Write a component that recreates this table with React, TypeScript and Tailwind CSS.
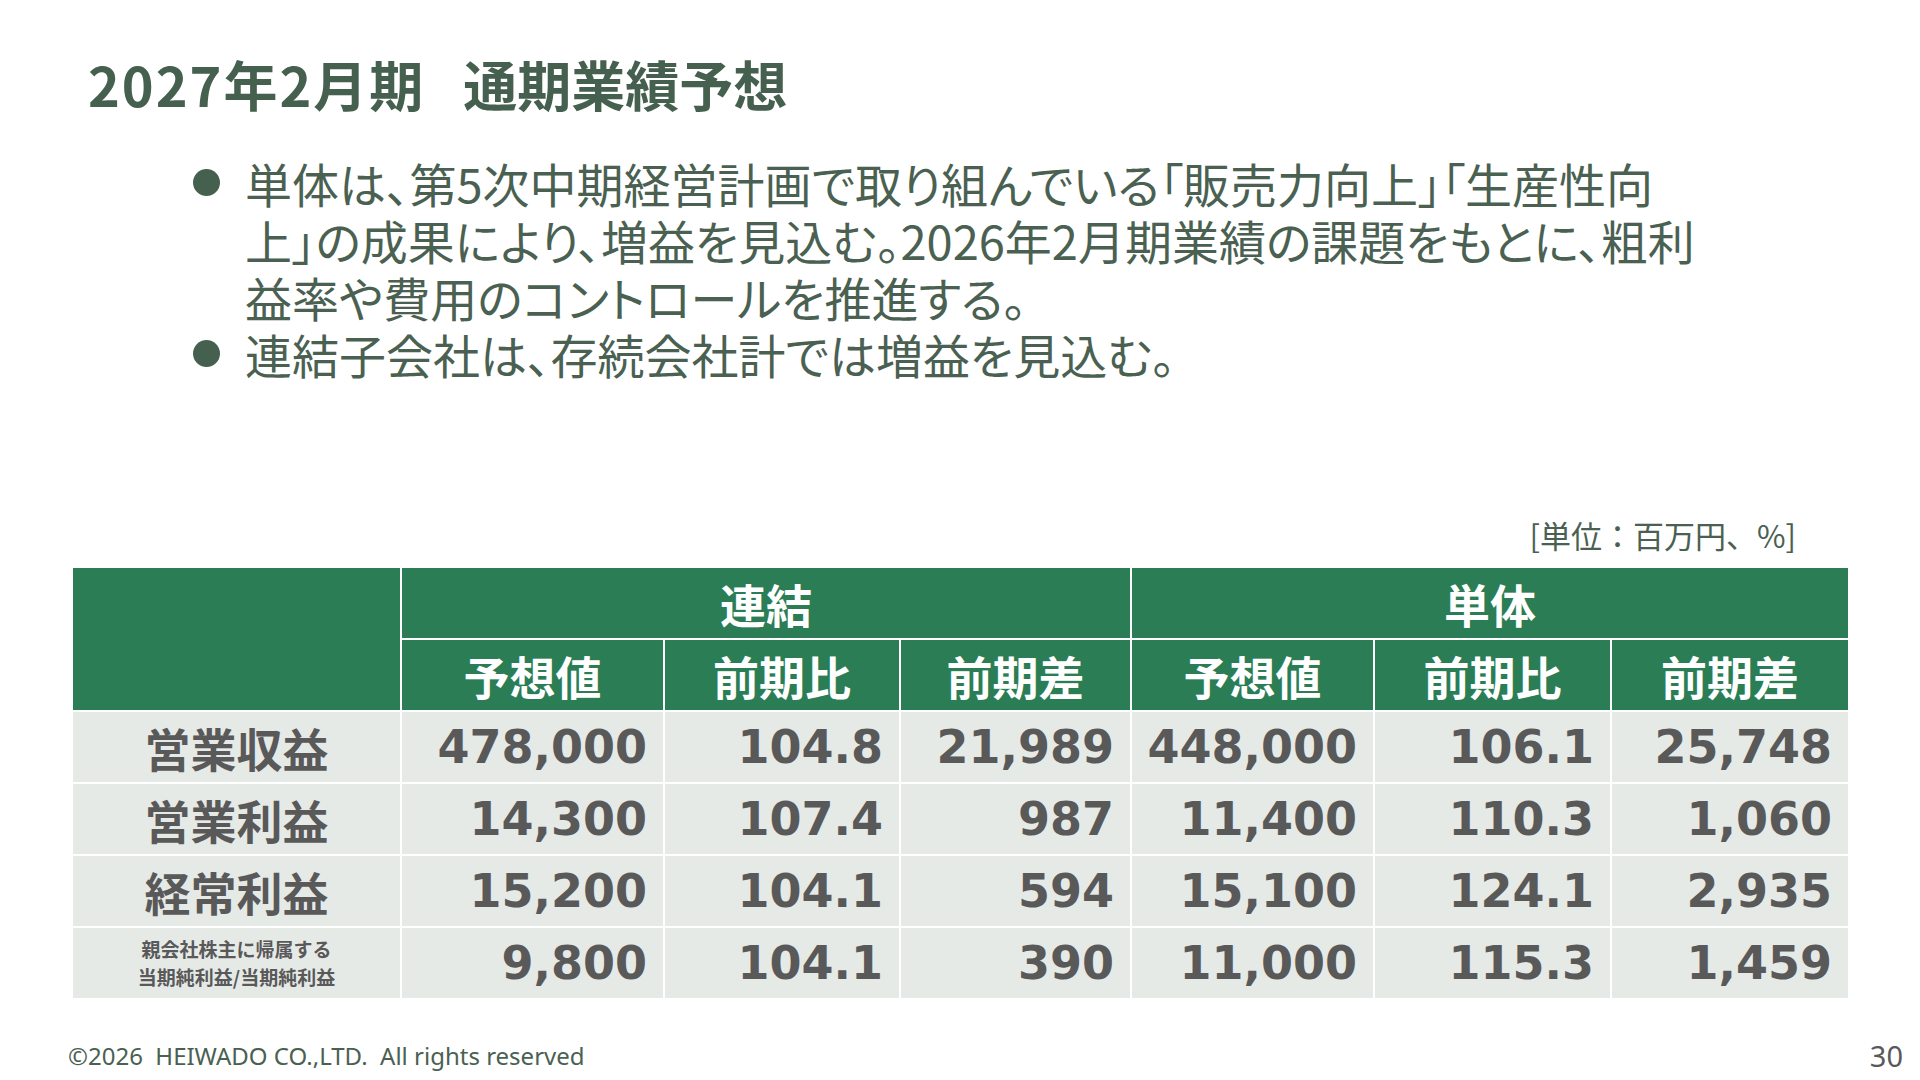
import React from 'react';

const jp = '"Noto Sans CJK JP", "Noto Sans", sans-serif';
const num = '"DejaVu Sans", "Liberation Sans", sans-serif';

const rows = [
    { label: '営業収益', values: ['478,000', '104.8', '21,989', '448,000', '106.1', '25,748'] },
    { label: '営業利益', values: ['14,300', '107.4', '987', '11,400', '110.3', '1,060'] },
    { label: '経常利益', values: ['15,200', '104.1', '594', '15,100', '124.1', '2,935'] },
    { label: null, values: ['9,800', '104.1', '390', '11,000', '115.3', '1,459'] },
];

const subHeads = ['予想値', '前期比', '前期差', '予想値', '前期比', '前期差'];

function Bullet({ children }: { children: React.ReactNode }) {
    return (
        <div className="flex">
            <div className="w-[245px] flex justify-end pr-[25px] pt-[15px] shrink-0">
                <div className="w-[27px] h-[27px] rounded-full bg-[#46604f]" />
            </div>
            <div className="whitespace-nowrap">{children}</div>
        </div>
    );
}

export default function App() {
    return (
        <div
            className="w-[1920px] h-[1080px] bg-white flex flex-col overflow-hidden"
            style={{ fontFamily: jp }}
        >
            {/* title */}
            <div className="mt-[57px] pl-[88px] h-[54px] flex gap-[38px] text-[54px] leading-[54px] font-bold text-[#46604f]">
                <span className="tracking-[2px]">2027年2月期</span>
                <span>通期業績予想</span>
            </div>

            {/* bullets */}
            <div className="mt-[43px] text-[47px] leading-[57px] text-[#4a6152]" style={{ fontFeatureSettings: '"palt"' }}>
                <Bullet>
                    単体は、第5次中期経営計画で取り組んでいる「販売力向上」「生産性向
                    <br />
                    上」の成果により、増益を見込む。2026年2月期業績の課題をもとに、粗利
                    <br />
                    益率や費用のコントロールを推進する。
                </Bullet>
                <Bullet>連結子会社は、存続会社計では増益を見込む。</Bullet>
            </div>

            {/* unit */}
            <div className="mt-[135px] pr-[124px] text-right text-[31px] leading-[36px] text-[#4a6152]">
                [単位：百万円、%]
            </div>

            {/* table */}
            <div className="mt-[15px] ml-[73px] grid grid-cols-[327px_261px_234px_229px_241px_235px_236px] grid-rows-[70px_70px_70px_70px_70px_70px] gap-[2px] w-[1775px]">
                <div className="row-span-2 bg-[#2a7d55]" />
                <div className="col-span-3 bg-[#2a7d55] flex items-center justify-center text-white font-bold text-[46px]">
                    連結
                </div>
                <div className="col-span-3 bg-[#2a7d55] flex items-center justify-center text-white font-bold text-[46px]">
                    単体
                </div>
                {subHeads.map((h, i) => (
                    <div key={i} className="bg-[#2a7d55] flex items-center justify-center text-white font-bold text-[46px]">
                        {h}
                    </div>
                ))}
                {rows.map((r, ri) => (
                    <React.Fragment key={ri}>
                        <div className="bg-[#e6eae7] flex flex-col items-center justify-center text-[#595959] font-bold">
                            {r.label ? (
                                <span className="text-[46px] leading-none">{r.label}</span>
                            ) : (
                                <>
                                    <span className="text-[19px] leading-[28px]">親会社株主に帰属する</span>
                                    <span className="text-[19px] leading-[28px]">当期純利益/当期純利益</span>
                                </>
                            )}
                        </div>
                        {r.values.map((v, vi) => (
                            <div
                                key={vi}
                                className="bg-[#e6eae7] flex items-center justify-end pr-[16px] text-[#595959] font-bold text-[46px]"
                                style={{ fontFamily: num }}
                            >
                                {v}
                            </div>
                        ))}
                    </React.Fragment>
                ))}
            </div>

            {/* footer */}
            <div className="mt-auto mb-[9px] flex items-center justify-between pl-[68px] pr-[17px] h-[30px]">
                <span className="text-[24px] text-[#4a6152] whitespace-pre" style={{ fontFamily: '"Noto Sans", sans-serif' }}>
                    ©2026  HEIWADO CO.,LTD.  All rights reserved
                </span>
                <span className="text-[29px] text-[#595959]" style={{ fontFamily: '"Noto Sans", sans-serif' }}>
                    30
                </span>
            </div>
        </div>
    );
}
